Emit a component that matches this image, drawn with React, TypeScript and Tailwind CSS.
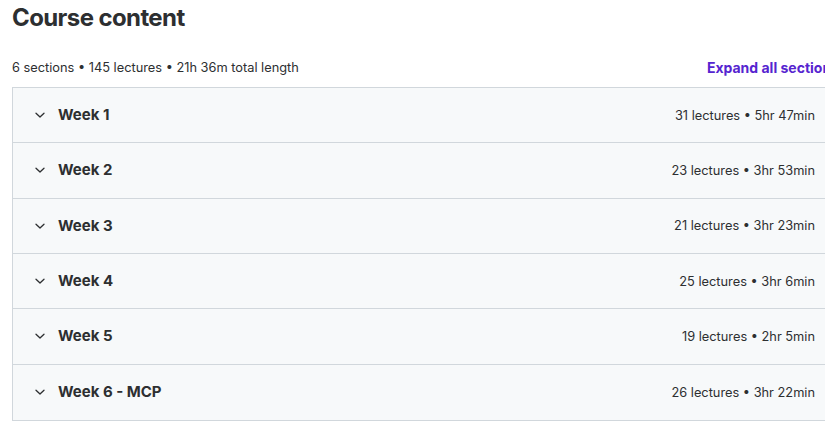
const sections = [
  { title: "Week 1", meta: "31 lectures • 5hr 47min" },
  { title: "Week 2", meta: "23 lectures • 3hr 53min" },
  { title: "Week 3", meta: "21 lectures • 3hr 23min" },
  { title: "Week 4", meta: "25 lectures • 3hr 6min" },
  { title: "Week 5", meta: "19 lectures • 2hr 5min" },
  { title: "Week 6 - MCP", meta: "26 lectures • 3hr 22min" },
];

const Chevron = () => (
  <svg width="12" height="12" viewBox="0 0 12 12" fill="none" className="text-[#2d2f31]">
    <path d="M2 4.2 L6 8 L10 4.2" stroke="currentColor" strokeWidth="1.3" strokeLinecap="round" strokeLinejoin="round" />
  </svg>
);

export default function App() {
  return (
    <div className="w-[825px] h-[421px] overflow-hidden bg-white font-['Inter',sans-serif] text-[#2d2f31]">
      <div className="w-[839px] pl-3">
        <h2 className="text-[24px] leading-[36px] font-bold tracking-[-0.6px]">Course content</h2>
        <div className="flex items-center justify-between mt-[18px] h-[28px] pb-[1px]">
          <span className="text-[12.8px] text-[#2d2f31]">6 sections • 145 lectures • 21h 36m total length</span>
          <button className="text-[14px] font-bold text-[#5624d0] whitespace-nowrap">Expand all sections</button>
        </div>
        <div className="mt-[5px] border border-[#d1d7dc]">
          {sections.map((s, i) => (
            <div
              key={s.title}
              className={`flex items-center justify-between h-[55.33px] bg-[#f7f9fa] pl-[21px] pr-[23px] ${i < sections.length - 1 ? "border-b border-[#d1d7dc]" : ""}`}
            >
              <div className="flex items-center gap-[12px]">
                <Chevron />
                <span className="text-[15px] font-bold">{s.title}</span>
              </div>
              <span className="text-[12.8px] text-[#2d2f31]">{s.meta}</span>
            </div>
          ))}
        </div>
      </div>
    </div>
  );
}
